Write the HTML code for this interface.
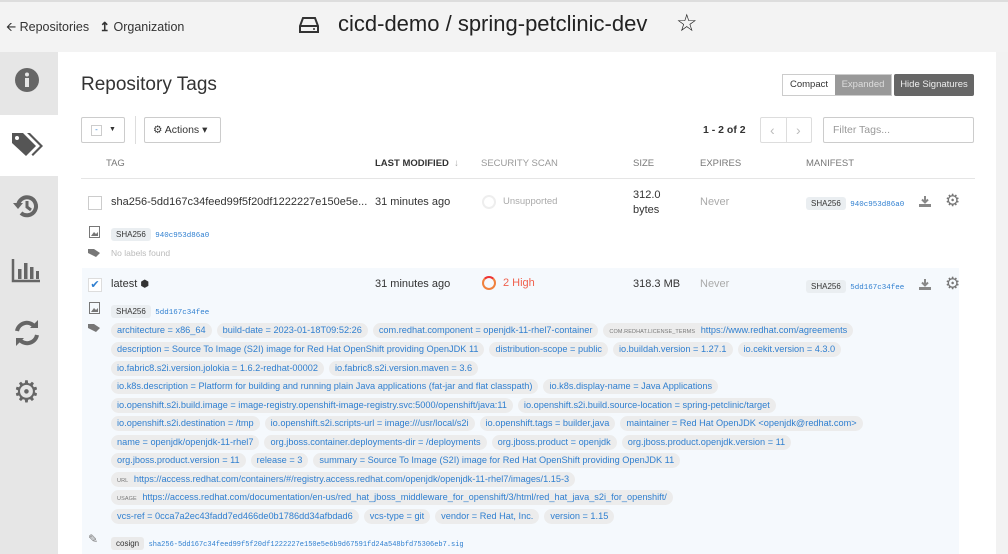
<!DOCTYPE html>
<html><head><meta charset="utf-8"><style>
*{margin:0;padding:0;box-sizing:border-box}
body{width:1008px;height:554px;overflow:hidden;background:#fff;font-family:"Liberation Sans",Arial,sans-serif;color:#333;position:relative}
.a{position:absolute}
.hdr{left:0;top:0;width:1008px;height:52px;background:#f3f3f3;border-top:2px solid #ddd}
.side{left:0;top:52px;width:58px;height:502px;background:#e6e6e6}
.rs{left:996px;top:52px;width:12px;height:502px;background:#f2f2f2}
.chip{display:inline-block;background:#ececec;color:#2f7fd0;font-size:9.2px;height:15px;line-height:15px;padding:0 6px;border-radius:8px;margin-right:5px;white-space:nowrap}
.row{position:absolute;left:111px;white-space:nowrap}
.sm{font-size:5.5px;color:#777;letter-spacing:.1px;margin-right:3px}
.mono{font-family:"Liberation Mono",monospace;font-size:7.5px;color:#2f7fd0}
.sha{background:#eaeef1;font-size:8px;padding:2px 5px;border-radius:3px;color:#333}
.th{font-size:9.5px;color:#777;top:158px}
</style></head><body>
<div class="a hdr"></div>
<div class="a" style="left:6px;top:18px;font-size:12.5px;color:#333">&#129128; Repositories&nbsp;&nbsp;&nbsp;<b style="font-weight:bold">&#8613;</b> Organization</div>
<svg class="a" style="left:298px;top:16px" width="22" height="18" viewBox="0 0 22 18"><path d="M5 2h12l3 8v6H2v-6z M2 10h18" fill="none" stroke="#333" stroke-width="2"/><circle cx="16" cy="13" r="1" fill="#333"/></svg>
<div class="a" style="left:338px;top:11px;font-size:22px;color:#222">cicd-demo / spring-petclinic-dev</div>
<div class="a" style="left:676px;top:9px;font-size:24px;color:#222">&#9734;</div>
<div class="a side"></div>
<div class="a" style="left:0;top:115px;width:58px;height:61px;background:#fff"></div>
<div class="a rs"></div>
<svg class="a" style="left:14px;top:67px" width="26" height="26"><circle cx="13" cy="13" r="12" fill="#666"/><rect x="11" y="11" width="4" height="9" fill="#e6e6e6"/><circle cx="13" cy="7.5" r="2" fill="#e6e6e6"/></svg>
<svg class="a" style="left:11px;top:131px" width="32" height="28"><path d="M1 2h11l13 13-10 10L1 12z" fill="#555"/><path d="M16 2h3l13 13-10 10-1.5-1.5 8.5-8.5z" fill="#555"/><circle cx="6" cy="7" r="2" fill="#fff"/></svg>
<svg class="a" style="left:12px;top:193px" width="28" height="26"><path d="M6 13a9 9 0 1 1 3 7" fill="none" stroke="#666" stroke-width="4"/><path d="M1 10l5 6 5-6z" fill="#666"/><path d="M15 8v6l4 3" stroke="#666" stroke-width="3" fill="none"/></svg>
<svg class="a" style="left:11px;top:257px" width="30" height="26"><path d="M2 2v22h27" stroke="#666" stroke-width="2.5" fill="none"/><rect x="7" y="12" width="3.5" height="10" fill="#666"/><rect x="13" y="6" width="3.5" height="16" fill="#666"/><rect x="19" y="10" width="3.5" height="12" fill="#666"/><rect x="25" y="14" width="3" height="8" fill="#666"/></svg>
<svg class="a" style="left:13px;top:319px" width="28" height="28"><path d="M4 12a10 10 0 0 1 18-4 M24 16a10 10 0 0 1-18 4" fill="none" stroke="#666" stroke-width="4"/><path d="M17 9h8V1z M11 19H3v8z" fill="#666"/></svg>
<div class="a" style="left:13px;top:378px;font-size:30px;color:#666;line-height:30px">&#9881;</div>

<div class="a" style="left:81px;top:74px;font-size:19px;color:#333">Repository Tags</div>
<div class="a" style="left:782px;top:74px;height:22px;border:1px solid #ccc;display:flex;font-size:9.5px">
<span style="width:52px;text-align:center;line-height:20px;background:#fff">Compact</span><span style="width:56px;text-align:center;line-height:20px;background:#999;color:#ddd">Expanded</span></div>
<div class="a" style="left:894px;top:74px;width:80px;height:22px;background:#666;color:#eee;font-size:9.5px;text-align:center;line-height:22px;border-radius:2px">Hide Signatures</div>
<div class="a" style="left:81px;top:117px;width:44px;height:26px;border:1px solid #ccc;border-radius:2px"><span class="a" style="left:9px;top:7px;width:11px;height:11px;border:1px solid #ccc;font-size:8px;color:#2f7fd0;text-align:center;line-height:8px">-</span><span class="a" style="left:27px;top:8px;font-size:7px">&#9660;</span></div>
<div class="a" style="left:135px;top:116px;height:28px;border-left:1px solid #ddd"></div>
<div class="a" style="left:144px;top:117px;width:77px;height:26px;border:1px solid #ccc;border-radius:2px;font-size:10.5px;line-height:24px;padding-left:8px">&#9881; Actions &#9662;</div>
<div class="a" style="left:703px;top:124px;font-size:10.5px;font-weight:bold;color:#333">1 - 2 of 2</div>
<div class="a" style="left:760px;top:117px;width:52px;height:26px;border:1px solid #ddd;border-radius:2px;color:#bbb;font-size:14px"><span class="a" style="left:9px;top:4px">&#8249;</span><span class="a" style="left:25px;top:0;height:24px;border-left:1px solid #ddd"></span><span class="a" style="left:35px;top:4px">&#8250;</span></div>
<div class="a" style="left:823px;top:117px;width:151px;height:26px;border:1px solid #ccc;border-radius:2px;font-size:10.5px;color:#999;line-height:24px;padding-left:9px">Filter Tags...</div>
<div class="a th" style="left:106px">TAG</div>
<div class="a th" style="left:375px;color:#333;font-weight:bold">LAST MODIFIED <span style="color:#aaa;font-weight:normal">&nbsp;&#8595;</span></div>
<div class="a th" style="left:481px;color:#999">SECURITY SCAN</div>
<div class="a th" style="left:633px">SIZE</div>
<div class="a th" style="left:700px">EXPIRES</div>
<div class="a th" style="left:806px">MANIFEST</div>
<div class="a" style="left:81px;top:178px;width:894px;border-top:1px solid #e5e5e5"></div>

<div class="a" style="left:88px;top:196px;width:14px;height:14px;border:1px solid #ccc"></div>
<div class="a" style="left:111px;top:196px;font-size:11px">sha256-5dd167c34feed99f5f20df1222227e150e5e...</div>
<div class="a" style="left:375px;top:196px;font-size:11px">31 minutes ago</div>
<div class="a" style="left:482px;top:195px;width:14px;height:14px;border:2px solid #eee;border-radius:50%"></div>
<div class="a" style="left:503px;top:196px;font-size:9.5px;color:#aaa">Unsupported</div>
<div class="a" style="left:633px;top:188px;font-size:11px;line-height:15px">312.0<br>bytes</div>
<div class="a" style="left:700px;top:196px;font-size:11px;color:#aaa">Never</div>
<div class="a" style="left:806px;top:196px;line-height:12px"><span class="sha">SHA256</span> <span class="mono">940c953d86a0</span></div>
<svg class="a" style="left:919px;top:195px" width="12" height="12"><path d="M6 1v6M3 4.5l3 3 3-3" stroke="#888" stroke-width="2" fill="none"/><rect x="0" y="9" width="12" height="3" fill="#888"/></svg>
<div class="a" style="left:945px;top:191px;font-size:17px;color:#777;line-height:20px">&#9881;</div>
<svg class="a" style="left:89px;top:226px" width="11" height="12"><rect x="0.5" y="0.5" width="10" height="11" fill="none" stroke="#777"/><path d="M2 10l3-4 2 2 2-2v4z" fill="#777"/></svg>
<svg class="a" style="left:88px;top:248px" width="13" height="10"><path d="M0 1h6l6 4-4 4L0 5z" fill="#777"/></svg>
<div class="a" style="left:111px;top:227px;line-height:12px"><span class="sha">SHA256</span> <span class="mono">940c953d86a0</span></div>
<div class="a" style="left:111px;top:248px;font-size:8.5px;color:#bbb">No labels found</div>

<div class="a" style="left:82px;top:268px;width:877px;height:286px;background:#f5f9fd"></div>
<div class="a" style="left:88px;top:278px;width:14px;height:14px;border:1px solid #ddd;background:#fff;color:#2f7fd0;font-size:11px;text-align:center;line-height:12px">&#10004;</div>
<div class="a" style="left:111px;top:278px;font-size:11px">latest <span style="font-size:10px">&#11042;</span></div>
<div class="a" style="left:375px;top:278px;font-size:11px">31 minutes ago</div>
<div class="a" style="left:482px;top:276px;width:14px;height:14px;border:2px solid #f0813d;border-top-color:#e33;border-radius:50%"></div>
<div class="a" style="left:503px;top:277px;font-size:11px;color:#f0614d">2 High</div>
<div class="a" style="left:633px;top:278px;font-size:11px">318.3 MB</div>
<div class="a" style="left:700px;top:278px;font-size:11px;color:#aaa">Never</div>
<div class="a" style="left:806px;top:279px;line-height:12px"><span class="sha">SHA256</span> <span class="mono">5dd167c34fee</span></div>
<svg class="a" style="left:919px;top:278px" width="12" height="12"><path d="M6 1v6M3 4.5l3 3 3-3" stroke="#888" stroke-width="2" fill="none"/><rect x="0" y="9" width="12" height="3" fill="#888"/></svg>
<div class="a" style="left:945px;top:274px;font-size:17px;color:#777;line-height:20px">&#9881;</div>
<svg class="a" style="left:89px;top:302px" width="11" height="12"><rect x="0.5" y="0.5" width="10" height="11" fill="none" stroke="#777"/><path d="M2 10l3-4 2 2 2-2v4z" fill="#777"/></svg>
<svg class="a" style="left:88px;top:323px" width="13" height="10"><path d="M0 1h6l6 4-4 4L0 5z" fill="#777"/></svg>
<div class="a" style="left:111px;top:304px;line-height:12px"><span class="sha">SHA256</span> <span class="mono">5dd167c34fee</span></div>

<div class="row" style="top:320px"><span class="chip">architecture = x86_64</span><span class="chip">build-date = 2023-01-18T09:52:26</span><span class="chip">com.redhat.component = openjdk-11-rhel7-container</span><span class="chip"><span class="sm">COM.REDHAT.LICENSE_TERMS</span> https://www.redhat.com/agreements</span></div>
<div class="row" style="top:339px"><span class="chip">description = Source To Image (S2I) image for Red Hat OpenShift providing OpenJDK 11</span><span class="chip">distribution-scope = public</span><span class="chip">io.buildah.version = 1.27.1</span><span class="chip">io.cekit.version = 4.3.0</span></div>
<div class="row" style="top:358px"><span class="chip">io.fabric8.s2i.version.jolokia = 1.6.2-redhat-00002</span><span class="chip">io.fabric8.s2i.version.maven = 3.6</span></div>
<div class="row" style="top:376px"><span class="chip">io.k8s.description = Platform for building and running plain Java applications (fat-jar and flat classpath)</span><span class="chip">io.k8s.display-name = Java Applications</span></div>
<div class="row" style="top:395px"><span class="chip">io.openshift.s2i.build.image = image-registry.openshift-image-registry.svc:5000/openshift/java:11</span><span class="chip">io.openshift.s2i.build.source-location = spring-petclinic/target</span></div>
<div class="row" style="top:413px"><span class="chip">io.openshift.s2i.destination = /tmp</span><span class="chip">io.openshift.s2i.scripts-url = image:///usr/local/s2i</span><span class="chip">io.openshift.tags = builder,java</span><span class="chip">maintainer = Red Hat OpenJDK &lt;openjdk@redhat.com&gt;</span></div>
<div class="row" style="top:432px"><span class="chip">name = openjdk/openjdk-11-rhel7</span><span class="chip">org.jboss.container.deployments-dir = /deployments</span><span class="chip">org.jboss.product = openjdk</span><span class="chip">org.jboss.product.openjdk.version = 11</span></div>
<div class="row" style="top:450px"><span class="chip">org.jboss.product.version = 11</span><span class="chip">release = 3</span><span class="chip">summary = Source To Image (S2I) image for Red Hat OpenShift providing OpenJDK 11</span></div>
<div class="row" style="top:469px"><span class="chip"><span class="sm">URL</span> https://access.redhat.com/containers/#/registry.access.redhat.com/openjdk/openjdk-11-rhel7/images/1.15-3</span></div>
<div class="row" style="top:487px"><span class="chip"><span class="sm">USAGE</span> https://access.redhat.com/documentation/en-us/red_hat_jboss_middleware_for_openshift/3/html/red_hat_java_s2i_for_openshift/</span></div>
<div class="row" style="top:506px"><span class="chip">vcs-ref = 0cca7a2ec43fadd7ed466de0b1786dd34afbdad6</span><span class="chip">vcs-type = git</span><span class="chip">vendor = Red Hat, Inc.</span><span class="chip">version = 1.15</span></div>
<div class="a" style="left:88px;top:532px;font-size:12px;color:#777">&#9998;</div>
<div class="a" style="left:111px;top:536px;line-height:12px"><span class="sha" style="background:#eaeaea">cosign</span> <span class="mono" style="font-size:7px">sha256-5dd167c34feed99f5f20df1222227e150e5e6b9d67591fd24a548bfd75306eb7.sig</span></div>
</body></html>
